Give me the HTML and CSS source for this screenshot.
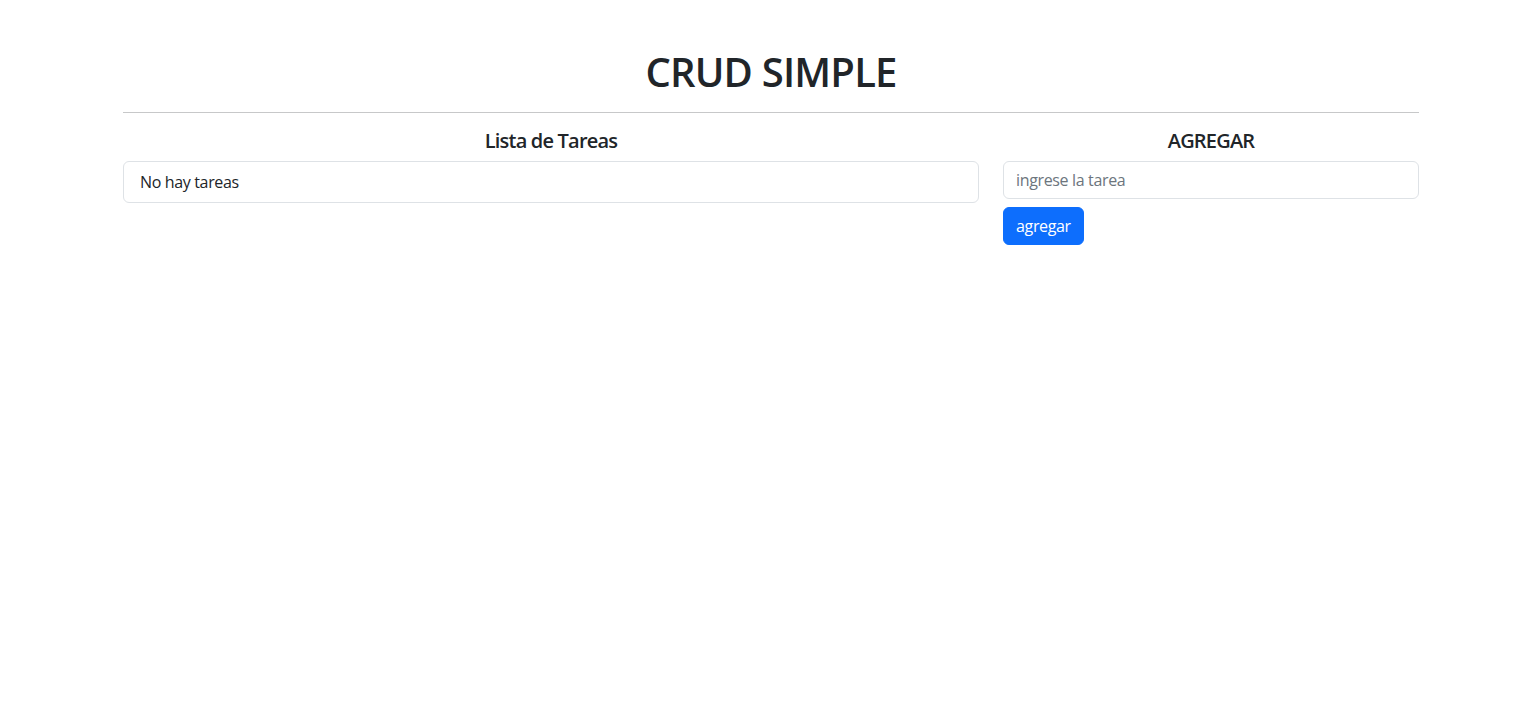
FILE: index.html
```html
<!DOCTYPE html>
<html lang="es">
<head>
<meta charset="utf-8">
<title>CRUD SIMPLE</title>
<link rel="stylesheet" href="styles.css">
</head>
<body>
<div class="container">
  <h1 class="title">CRUD SIMPLE</h1>
  <hr class="divider">
  <div class="row">
    <div class="col-main">
      <h5 class="heading">Lista de Tareas</h5>
      <ul class="list">
        <li class="list-item">No hay tareas</li>
      </ul>
    </div>
    <div class="col-side">
      <h5 class="heading">AGREGAR</h5>
      <form class="form">
        <input class="input" type="text" placeholder="ingrese la tarea">
        <button class="btn" type="button">agregar</button>
      </form>
    </div>
  </div>
</div>
</body>
</html>
```

FILE: styles.css
```css
* { box-sizing: border-box; }
body {
  margin: 0;
  font-family: "Open Sans", "Noto Sans", sans-serif;
  font-size: 16px;
  line-height: 1.5;
  letter-spacing: -0.35px;
  color: #212529;
  background: #fff;
}
.container {
  width: 1320px;
  margin: 0 0 0 111px;
  padding: 0 12px;
}
.title {
  margin: 48px 0 8px;
  font-size: 40px;
  font-weight: 600;
  line-height: 1.2;
  letter-spacing: -0.8px;
  text-align: center;
}
.divider {
  margin: 16px 0;
  border: 0;
  border-top: 1px solid #212529;
  opacity: .25;
}
.row {
  display: flex;
  margin: 0 -12px;
}
.col-main { flex: 0 0 66.6667%; padding: 0 12px; }
.col-side { flex: 0 0 33.3333%; padding: 0 12px; }
.heading {
  margin: 0 0 8px;
  font-size: 20px;
  font-weight: 600;
  line-height: 1.2;
  letter-spacing: -0.8px;
  text-align: center;
}
.list {
  list-style: none;
  margin: 0;
  padding: 0;
}
.list-item {
  padding: 8px 16px;
  border: 1px solid #dee2e6;
  border-radius: 6px;
}
.form { display: block; }
.input {
  display: block;
  width: 100%;
  padding: 6px 12px;
  font: inherit;
  letter-spacing: inherit;
  line-height: 1.5;
  color: #212529;
  border: 1px solid #dee2e6;
  border-radius: 6px;
  margin-bottom: 8px;
}
.input::placeholder { color: #6c757d; }
.btn {
  display: inline-block;
  padding: 6px 12px;
  font: inherit;
  letter-spacing: inherit;
  line-height: 1.5;
  color: #fff;
  background: #0d6efd;
  border: 1px solid #0d6efd;
  border-radius: 6px;
}
```
